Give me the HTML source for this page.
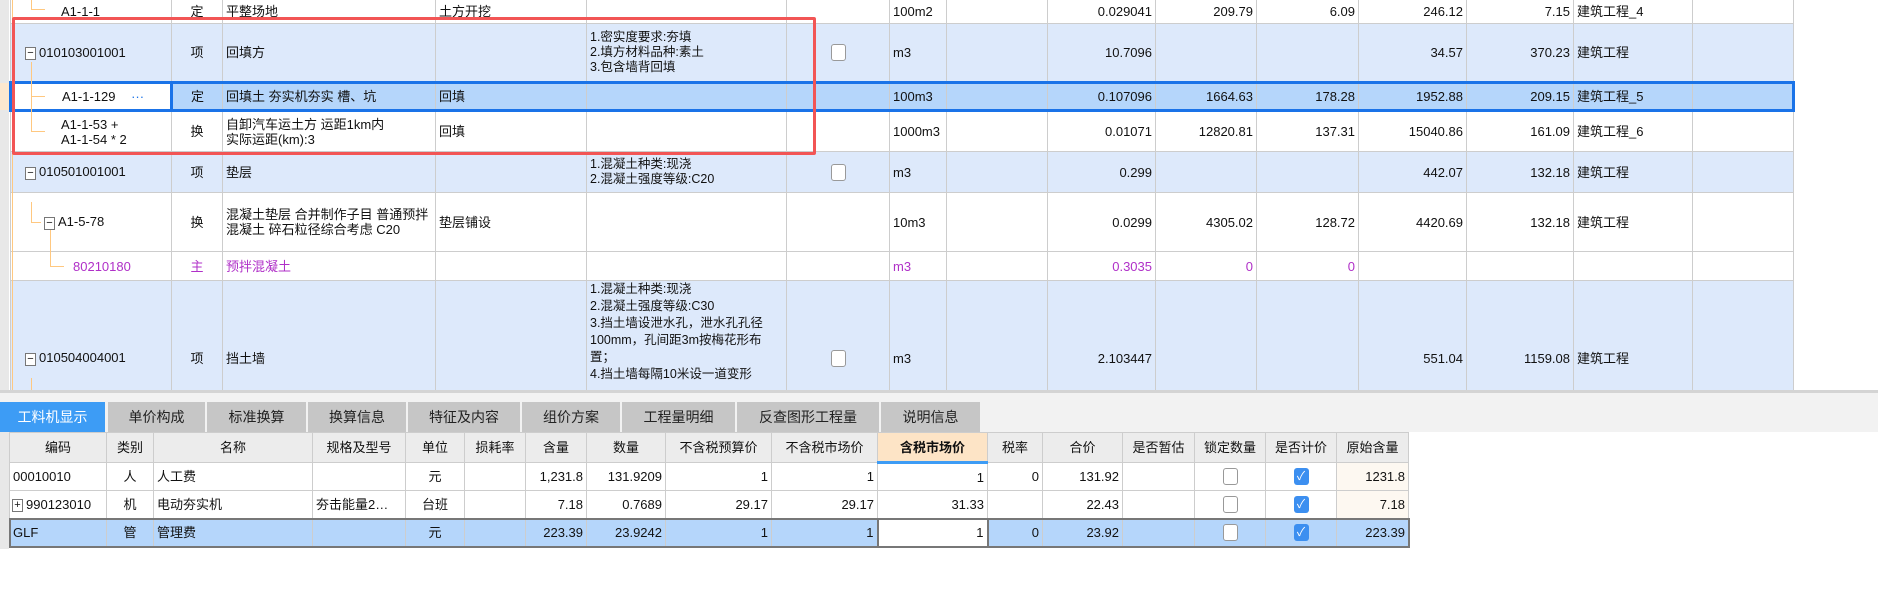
<!DOCTYPE html>
<html><head><meta charset="utf-8"><style>
*{box-sizing:border-box;margin:0;padding:0}
body{width:1878px;height:600px;overflow:hidden;background:#fff;font-family:"Liberation Sans","Noto Sans CJK SC",sans-serif;font-size:13px;color:#111;position:relative}
table{border-collapse:collapse;table-layout:fixed;position:absolute}
td{border:1px solid #cdcdcd;padding:0 3px;overflow:hidden;white-space:nowrap;line-height:15px}
.r{text-align:right}.c{text-align:center}
.b td{background:#dde9fb}
.sel td{background:#b5d6fb;border-top:3px solid #1a73e8;border-bottom:3px solid #1a73e8}
.pu td{color:#b030c8}
.wrap{white-space:normal}
.cb{display:inline-block;width:15px;height:17px;border:1px solid #999;border-radius:3px;background:#fff;vertical-align:middle}
.ck{display:inline-block;width:15px;height:17px;border-radius:3px;background:#3c8ff0;color:#fff;font-size:12px;line-height:17px;text-align:center;vertical-align:middle}
.mi{display:inline-block;width:11px;height:13px;border:1px solid #777;font-size:11px;line-height:10px;text-align:center;background:#fff;vertical-align:middle;margin-right:3px}
#tabs div{position:absolute;top:402px;height:30px;background:#c6c6c6;text-align:center;line-height:30px;font-size:14px;color:#222}
#bt td{height:28px}
#bt .h td{background:#ececec;text-align:center;height:30px}
#bt .s td{background:#b5d6fb}
.ol{position:absolute;background:#ffc880}
</style></head><body>
<div style="position:absolute;left:0;top:0;width:9px;height:390px;background:#e8e8e8"></div>
<div style="position:absolute;left:0;top:83px;width:9px;height:27px;background:#fde8cf"></div>
<table style="left:9px;top:-1px;width:1783px">
<colgroup><col style="width:161px"><col style="width:51px"><col style="width:213px"><col style="width:151px"><col style="width:200px"><col style="width:103px"><col style="width:57px"><col style="width:101px"><col style="width:108px"><col style="width:101px"><col style="width:102px"><col style="width:108px"><col style="width:107px"><col style="width:119px"><col style="width:101px"></colgroup>
<tr style="height:24px"><td style="padding-left:50px">A1-1-1</td><td class="c">定</td><td>平整场地</td><td>土方开挖</td><td></td><td></td><td>100m2</td><td></td><td class="r">0.029041</td><td class="r">209.79</td><td class="r">6.09</td><td class="r">246.12</td><td class="r">7.15</td><td>建筑工程_4</td><td></td></tr>
<tr class="b" style="height:59px"><td style="padding-left:14px"><span class="mi">−</span>010103001001</td><td class="c">项</td><td>回填方</td><td></td><td class="wrap" style="font-size:12.5px">1.密实度要求:夯填<br>2.填方材料品种:素土<br>3.包含墙背回填</td><td class="c"><span class="cb"></span></td><td>m3</td><td></td><td class="r">10.7096</td><td></td><td></td><td class="r">34.57</td><td class="r">370.23</td><td>建筑工程</td><td></td></tr>
<tr class="sel" style="height:28px"><td style="padding-left:50px;background:#fff;border:3px solid #1a73e8">A1-1-129 <span style="color:#1a73e8;margin-left:12px">···</span></td><td class="c">定</td><td>回填土 夯实机夯实 槽、坑</td><td>回填</td><td></td><td></td><td>100m3</td><td></td><td class="r">0.107096</td><td class="r">1664.63</td><td class="r">178.28</td><td class="r">1952.88</td><td class="r">209.15</td><td>建筑工程_5</td><td style="border-right:3px solid #1a73e8"></td></tr>
<tr style="height:41px"><td style="padding-left:50px">A1-1-53 +<br>A1-1-54 * 2</td><td class="c">换</td><td>自卸汽车运土方 运距1km内<br>实际运距(km):3</td><td>回填</td><td></td><td></td><td>1000m3</td><td></td><td class="r">0.01071</td><td class="r">12820.81</td><td class="r">137.31</td><td class="r">15040.86</td><td class="r">161.09</td><td>建筑工程_6</td><td></td></tr>
<tr class="b" style="height:41px"><td style="padding-left:14px"><span class="mi">−</span>010501001001</td><td class="c">项</td><td>垫层</td><td></td><td style="font-size:12.5px">1.混凝土种类:现浇<br>2.混凝土强度等级:C20</td><td class="c"><span class="cb"></span></td><td>m3</td><td></td><td class="r">0.299</td><td></td><td></td><td class="r">442.07</td><td class="r">132.18</td><td>建筑工程</td><td></td></tr>
<tr style="height:59px"><td style="padding-left:33px"><span class="mi">−</span>A1-5-78</td><td class="c">换</td><td class="wrap">混凝土垫层 合并制作子目 普通预拌混凝土 碎石粒径综合考虑 C20</td><td>垫层铺设</td><td></td><td></td><td>10m3</td><td></td><td class="r">0.0299</td><td class="r">4305.02</td><td class="r">128.72</td><td class="r">4420.69</td><td class="r">132.18</td><td>建筑工程</td><td></td></tr>
<tr class="pu" style="height:29px"><td style="padding-left:62px">80210180</td><td class="c">主</td><td>预拌混凝土</td><td></td><td></td><td></td><td>m3</td><td></td><td class="r">0.3035</td><td class="r">0</td><td class="r">0</td><td></td><td></td><td></td><td></td></tr>
<tr class="b" style="height:115px"><td style="padding-left:14px;padding-top:40px"><span class="mi">−</span>010504004001</td><td class="c" style="padding-top:40px">项</td><td style="padding-top:40px">挡土墙</td><td></td><td class="wrap" style="vertical-align:top;font-size:12.5px;line-height:17px">1.混凝土种类:现浇<br>2.混凝土强度等级:C30<br>3.挡土墙设泄水孔，泄水孔孔径100mm，孔间距3m按梅花形布置；<br>4.挡土墙每隔10米设一道变形</td><td class="c" style="padding-top:40px"><span class="cb"></span></td><td style="padding-top:40px">m3</td><td></td><td class="r" style="padding-top:40px">2.103447</td><td></td><td></td><td class="r" style="padding-top:40px">551.04</td><td class="r" style="padding-top:40px">1159.08</td><td style="padding-top:40px">建筑工程</td><td></td></tr>
</table>
<div class="ol" style="left:31px;top:0;width:1px;height:10px"></div>
<div class="ol" style="left:31px;top:9px;width:14px;height:1px"></div>
<div class="ol" style="left:31px;top:62px;width:1px;height:70px"></div>
<div class="ol" style="left:31px;top:96px;width:14px;height:1px"></div>
<div class="ol" style="left:31px;top:131px;width:14px;height:1px"></div>
<div class="ol" style="left:31px;top:202px;width:1px;height:20px"></div>
<div class="ol" style="left:31px;top:222px;width:10px;height:1px"></div>
<div class="ol" style="left:12px;top:0;width:1px;height:390px"></div>
<div class="ol" style="left:50px;top:230px;width:1px;height:36px"></div>
<div class="ol" style="left:50px;top:266px;width:14px;height:1px"></div>
<div class="ol" style="left:31px;top:378px;width:1px;height:12px"></div>
<div style="position:absolute;left:12px;top:17px;width:804px;height:138px;border:3px solid #f25555;border-radius:2px"></div>
<div style="position:absolute;left:0;top:390px;width:1878px;height:42px;background:#f2f2f2;border-top:3px solid #d4d4d4"></div>
<div id="tabs">
<div style="left:0;width:105px;background:#3d9cf5;color:#fff">工料机显示</div>
<div style="left:108px;width:97px">单价构成</div>
<div style="left:207px;width:99px">标准换算</div>
<div style="left:308px;width:98px">换算信息</div>
<div style="left:408px;width:112px">特征及内容</div>
<div style="left:522px;width:98px">组价方案</div>
<div style="left:622px;width:113px">工程量明细</div>
<div style="left:737px;width:142px">反查图形工程量</div>
<div style="left:881px;width:99px">说明信息</div>
</div>
<div style="position:absolute;left:0;top:432px;width:9px;height:117px;background:#e8e8e8"></div>
<table id="bt" style="left:9px;top:432px;width:1399px;font-size:13px">
<colgroup><col style="width:97px"><col style="width:47px"><col style="width:159px"><col style="width:93px"><col style="width:59px"><col style="width:61px"><col style="width:61px"><col style="width:79px"><col style="width:106px"><col style="width:106px"><col style="width:110px"><col style="width:55px"><col style="width:80px"><col style="width:72px"><col style="width:71px"><col style="width:71px"><col style="width:72px"></colgroup>
<tr class="h"><td>编码</td><td>类别</td><td>名称</td><td>规格及型号</td><td>单位</td><td>损耗率</td><td>含量</td><td>数量</td><td>不含税预算价</td><td>不含税市场价</td><td style="background:#fde4c6;font-weight:bold;border-bottom:3px solid #3d9cf5">含税市场价</td><td>税率</td><td>合价</td><td>是否暂估</td><td>锁定数量</td><td>是否计价</td><td>原始含量</td></tr>
<tr><td>00010010</td><td class="c">人</td><td>人工费</td><td></td><td class="c">元</td><td></td><td class="r">1,231.8</td><td class="r">131.9209</td><td class="r">1</td><td class="r">1</td><td class="r">1</td><td class="r">0</td><td class="r">131.92</td><td></td><td class="c"><span class="cb"></span></td><td class="c"><span class="ck">✓</span></td><td class="r" style="background:#fdf8f1">1231.8</td></tr>
<tr><td style="padding-left:2px"><span class="mi">+</span>990123010</td><td class="c">机</td><td>电动夯实机</td><td>夯击能量2…</td><td class="c">台班</td><td></td><td class="r">7.18</td><td class="r">0.7689</td><td class="r">29.17</td><td class="r">29.17</td><td class="r">31.33</td><td></td><td class="r">22.43</td><td></td><td class="c"><span class="cb"></span></td><td class="c"><span class="ck">✓</span></td><td class="r" style="background:#fdf8f1">7.18</td></tr>
<tr class="s" style="outline:2px solid #777;outline-offset:-1px"><td>GLF</td><td class="c">管</td><td>管理费</td><td></td><td class="c">元</td><td></td><td class="r">223.39</td><td class="r">23.9242</td><td class="r">1</td><td class="r">1</td><td class="r" style="background:#fff;border:2px solid #777">1</td><td class="r">0</td><td class="r">23.92</td><td></td><td class="c"><span class="cb"></span></td><td class="c"><span class="ck">✓</span></td><td class="r">223.39</td></tr>
</table>
</body></html>
